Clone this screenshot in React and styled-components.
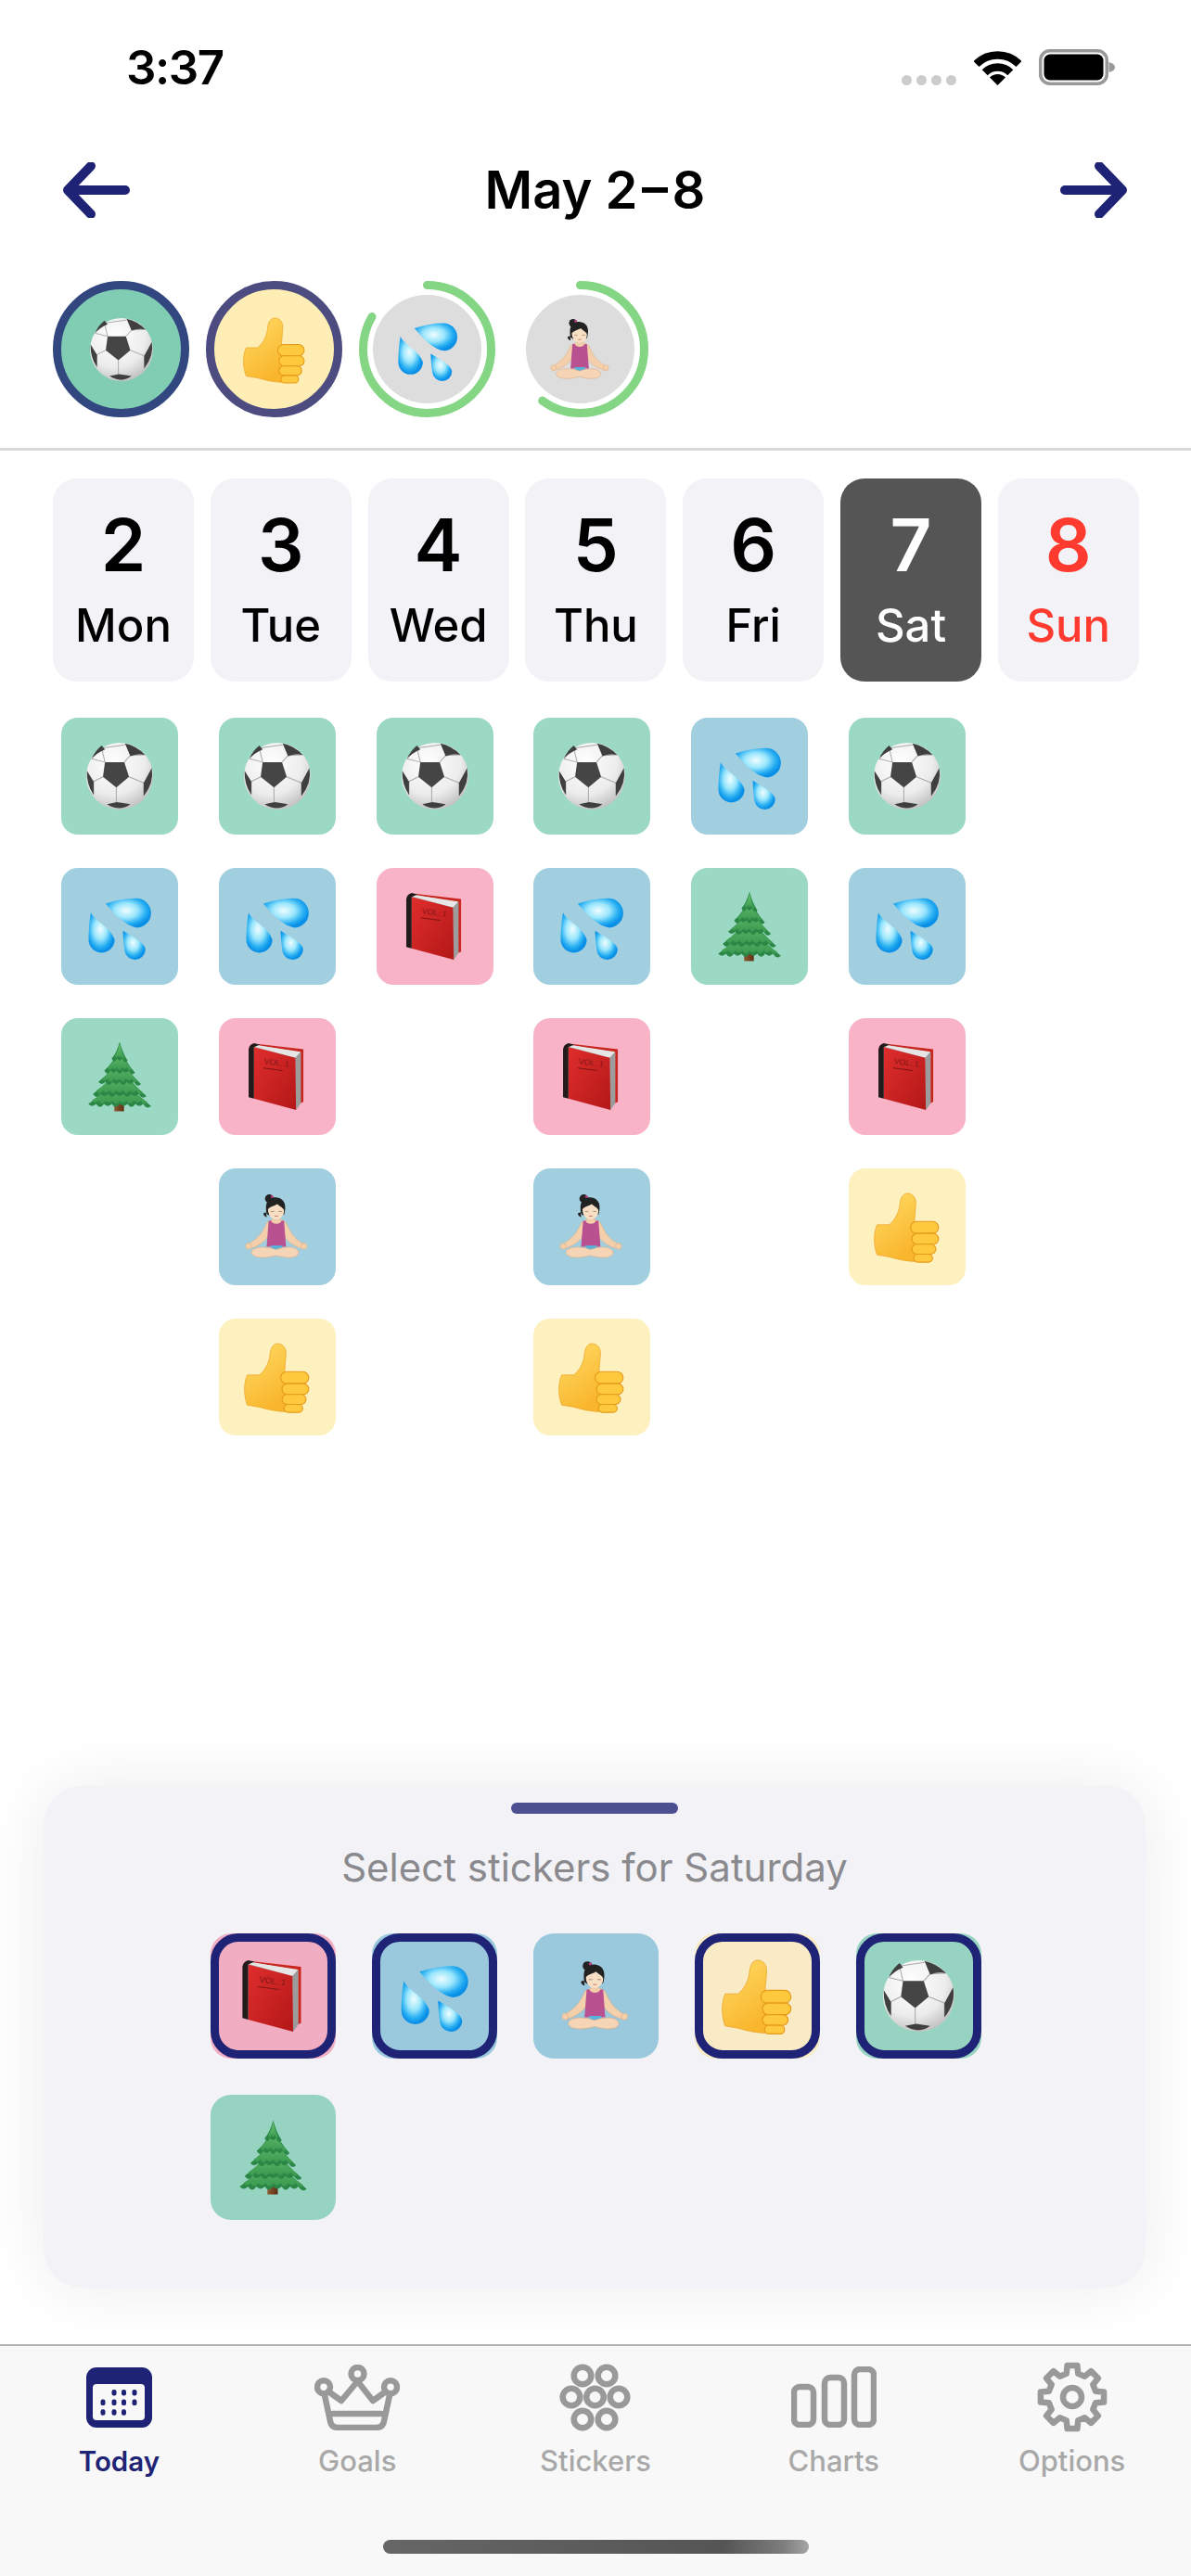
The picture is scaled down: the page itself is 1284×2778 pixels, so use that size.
import React from 'react'
import styled, { createGlobalStyle } from 'styled-components'

const NAVY = '#1f2375'
const GREY_ICON = '#999999'

const TONES = {
  ball: { day: '#9cd9c4', sheet: '#96d3c0' },
  tree: { day: '#9cd9c4', sheet: '#96d3c0' },
  drops: { day: '#a2cfe0', sheet: '#9ac8dc' },
  person: { day: '#a2cfe0', sheet: '#9ac8dc' },
  book: { day: '#f8b3c7', sheet: '#f1adc1' },
  thumb: { day: '#fef1c0', sheet: '#f8ebc6' },
}

const DAYS = [
  { num: 2, name: 'Mon', stickers: ['ball', 'drops', 'tree'] },
  { num: 3, name: 'Tue', stickers: ['ball', 'drops', 'book', 'person', 'thumb'] },
  { num: 4, name: 'Wed', stickers: ['ball', 'book'] },
  { num: 5, name: 'Thu', stickers: ['ball', 'drops', 'book', 'person', 'thumb'] },
  { num: 6, name: 'Fri', stickers: ['drops', 'tree'] },
  { num: 7, name: 'Sat', stickers: ['ball', 'drops', 'book', 'thumb'], selected: true },
  { num: 8, name: 'Sun', stickers: [], sunday: true },
]

const CHOICES = [
  { id: 'book', on: true },
  { id: 'drops', on: true },
  { id: 'person' },
  { id: 'thumb', on: true },
  { id: 'ball', on: true },
  { id: 'tree' },
]

const GlobalStyle = createGlobalStyle`
  html, body {
    margin: 0;
    padding: 0;
    background: #fff;
  }
  body {
    font-family: Inter, "Liberation Sans", sans-serif;
  }
`

const Page = styled.div`
  width: 1284px;
  height: 2778px;
  display: flex;
  flex-direction: column;
  background: #fff;
  overflow: hidden;
`

const StatusBar = styled.div`
  height: 130px;
  flex-shrink: 0;
  box-sizing: border-box;
  padding: 53px 82px 0 136px;
  display: flex;
  justify-content: space-between;
  align-items: flex-start;
`

const Clock = styled.span`
  font-size: 51px;
  font-weight: 600;
  line-height: 39px;
  letter-spacing: -1.5px;
  color: #000;
`

const StatusIcons = styled.div`
  display: flex;
  align-items: flex-end;
  height: 39px;
`

const SignalDots = styled.div`
  display: flex;
  gap: 5px;
  margin-right: 19px;
`

const SignalDot = styled.i`
  display: block;
  width: 11px;
  height: 11px;
  border-radius: 50%;
  background: #cccccc;
`

const WifiIcon = styled.svg`
  display: block;
  width: 51px;
  height: 37px;
  margin-right: 19px;
`

const BatteryIcon = styled.svg`
  display: block;
  width: 82px;
  height: 39px;
`

const Header = styled.header`
  height: 150px;
  flex-shrink: 0;
  box-sizing: border-box;
  padding: 0 69px 0 68px;
  display: flex;
  align-items: center;
  justify-content: space-between;
`

const ArrowIcon = styled.svg`
  display: block;
  width: 72px;
  height: 60px;
  color: ${NAVY};
`

const Title = styled.h1`
  margin: 0;
  font-size: 56px;
  font-weight: 600;
  line-height: 60px;
  color: #000;
`

const Rings = styled.div`
  display: flex;
  gap: 18px;
  padding: 23px 0 33px 57px;
  border-bottom: 3px solid #d8d8d8;
`

const DoneRing = styled.div`
  width: 147px;
  height: 147px;
  box-sizing: border-box;
  display: flex;
  align-items: center;
  justify-content: center;
  border-radius: 50%;
  border: 9px solid ${p => p.$border};
  background: ${p => p.$fill};
`

const ProgressRing = styled.div`
  position: relative;
  width: 147px;
  height: 147px;
  display: flex;
  align-items: center;
  justify-content: center;
`

const ProgressDisc = styled.div`
  width: 117px;
  height: 117px;
  display: flex;
  align-items: center;
  justify-content: center;
  border-radius: 50%;
  background: #dddddd;
`

const ProgressArc = styled.svg`
  position: absolute;
  inset: 0;
  width: 147px;
  height: 147px;
`

const Week = styled.section`
  display: grid;
  grid-template-columns: repeat(7, 152px);
  column-gap: 17.8px;
  padding: 30px 0 0 57px;
`

const DayCard = styled.div`
  height: 219px;
  box-sizing: border-box;
  padding-top: 33px;
  border-radius: 26px;
  text-align: center;
  background: ${p => (p.$selected ? '#555555' : '#f2f2f7')};
  color: ${p => (p.$selected ? '#fff' : p.$sunday ? '#ff3b30' : '#000')};
`

const DayNumber = styled.div`
  font-size: 78px;
  font-weight: 600;
  line-height: 78px;
`

const DayName = styled.div`
  margin-top: 23px;
  font-size: 49px;
  font-weight: 500;
  line-height: 50px;
`

const DayStickers = styled.div`
  display: flex;
  flex-direction: column;
  gap: 36px;
  padding: 39px 0 0 9px;
`

const Tile = styled.div`
  position: relative;
  box-sizing: border-box;
  width: ${p => p.$size}px;
  height: ${p => p.$size}px;
  display: flex;
  align-items: center;
  justify-content: center;
  border-radius: ${p => p.$radius}px;
  background: ${p => p.$bg};
`

const Picked = styled.div`
  position: absolute;
  inset: 0;
  border: 9px solid ${NAVY};
  border-radius: 30px;
`

const Spacer = styled.div`
  flex: 1;
`

const Sheet = styled.section`
  margin: 0 49px 61px 47px;
  height: 541px;
  box-sizing: border-box;
  padding-top: 18px;
  border-radius: 42px;
  background: #f2f2f7;
  box-shadow: 0 0 70px rgba(0, 0, 0, 0.08);
`

const Handle = styled.div`
  width: 180px;
  height: 12px;
  margin: 0 auto;
  border-radius: 6px;
  background: #4c5090;
`

const SheetTitle = styled.div`
  margin-top: 33px;
  text-align: center;
  font-size: 42px;
  line-height: 50px;
  color: #8a8a8e;
`

const SheetGrid = styled.div`
  display: grid;
  grid-template-columns: repeat(5, 135px);
  gap: 39px;
  padding: 46px 0 0 180px;
`

const TabBar = styled.nav`
  height: 250px;
  flex-shrink: 0;
  box-sizing: border-box;
  display: flex;
  flex-direction: column;
  border-top: 2px solid #b2b2b2;
  background: #f8f8f8;
`

const Tabs = styled.div`
  display: grid;
  grid-template-columns: repeat(5, 1fr);
  padding-top: 17px;
`

const Tab = styled.div`
  display: flex;
  flex-direction: column;
  align-items: center;
  color: ${p => (p.$active ? NAVY : '#a8a8a8')};
`

const TabIconBox = styled.div`
  height: 76px;
  display: flex;
  align-items: center;
  justify-content: center;
`

const TabSvg = styled.svg`
  display: block;
  width: ${p => p.$w}px;
  height: ${p => p.$h}px;
  fill: none;
  stroke: ${GREY_ICON};
  stroke-width: 6.5;
  stroke-linejoin: round;
  stroke-linecap: round;
`

const TabLabel = styled.span`
  margin-top: 16px;
  font-size: ${p => (p.$active ? 29.5 : 31)}px;
  font-weight: ${p => (p.$active ? 600 : 500)};
  line-height: 30px;
`

const HomeIndicator = styled.div`
  align-self: center;
  width: 459px;
  height: 15px;
  margin-top: 70px;
  border-radius: 8px;
  background: linear-gradient(90deg, #666 0%, #555 80%, #7d7d7d 94%, #a5a5a5 100%);
`

const Art = styled.svg`
  display: block;
  flex-shrink: 0;
  overflow: visible;
  width: ${p => p.$size}px;
  height: ${p => p.$size}px;
`

const Sprite = styled.svg`
  display: block;
  width: 0;
  height: 0;
`

const Sticker = ({ id, size }) => (
  <Art $size={size} viewBox="0 0 100 100">
    <use href={`#${id}`} />
  </Art>
)

// scalloped branch layer for the tree
const tierPath = (top, bottom, half, n) => {
  let d = `M50 ${top} Q${50 + half * 0.4} ${(top + bottom) / 2 + 4} ${50 + half} ${bottom}`
  const step = (2 * half) / n
  for (let i = 0; i < n; i++) {
    const x = 50 + half - step * (i + 1)
    const dip = i % 2 ? 3 : 6
    d += ` Q${x + step / 2} ${bottom + dip} ${x} ${bottom - 3}`
  }
  return d + ` Q${50 - half * 0.4} ${(top + bottom) / 2 + 4} 50 ${top}Z`
}

const TREE_TIERS = [
  [44, 94, 47, 8],
  [32, 79, 40, 7],
  [19, 61, 32, 6],
  [7, 44, 23, 5],
  [-2, 26, 12, 3],
]

const gearPath = (cx, cy, outer, root) => {
  const pts = []
  for (let i = 0; i < 8; i++) {
    const a = (i * 45 - 90) * (Math.PI / 180)
    const steps = [
      [-14, root],
      [-9, outer],
      [9, outer],
      [14, root],
    ]
    steps.forEach(([off, r]) => {
      const t = a + (off * Math.PI) / 180
      pts.push(`${(cx + r * Math.cos(t)).toFixed(1)} ${(cy + r * Math.sin(t)).toFixed(1)}`)
    })
  }
  return `M${pts.join(' L')}Z`
}

const EmojiSprite = () => (
  <Sprite aria-hidden="true">
    <defs>
      <radialGradient id="ballFill" cx="0.4" cy="0.3" r="0.8">
        <stop offset="0" stopColor="#ffffff" />
        <stop offset="0.6" stopColor="#ececec" />
        <stop offset="1" stopColor="#b4b4b4" />
      </radialGradient>
      <radialGradient id="dropFill" cx="0.45" cy="0.42" r="0.56">
        <stop offset="0" stopColor="#effdff" />
        <stop offset="0.45" stopColor="#9ae6fc" />
        <stop offset="0.8" stopColor="#25adf2" />
        <stop offset="1" stopColor="#0a8fe6" />
      </radialGradient>
      <linearGradient id="thumbFill" x1="0" y1="0" x2="0.5" y2="1">
        <stop offset="0" stopColor="#ffdc66" />
        <stop offset="1" stopColor="#f9b52c" />
      </linearGradient>
      <linearGradient id="bookFill" x1="0" y1="0" x2="1" y2="1">
        <stop offset="0" stopColor="#e02d2d" />
        <stop offset="1" stopColor="#b31818" />
      </linearGradient>
      <linearGradient id="treeFill" x1="0" y1="0" x2="0" y2="1">
        <stop offset="0" stopColor="#6cc270" />
        <stop offset="1" stopColor="#3a9a50" />
      </linearGradient>
      <linearGradient id="trunkFill" x1="0" y1="0" x2="1" y2="0">
        <stop offset="0" stopColor="#8d5a30" />
        <stop offset="1" stopColor="#5c3014" />
      </linearGradient>

      <g id="ball">
        <circle cx="50" cy="50" r="50" fill="url(#ballFill)" />
        <path
          d="M28 29 L23 8 M57 29 L66 19 M64 51 L86 60 M45 67 L45 92 M25 51 L11 58 M23 8 L58 3 M66 19 L88 18 M86 60 L86 79 M11 58 L11 77 M28 29 L8 24"
          stroke="#a9a9a9"
          strokeWidth="1.4"
          fill="none"
        />
        <path d="M28 29 L57 29 L64 51 L45 67 L25 51Z" fill="#454545" />
        <path d="M8 24 Q13 12 23 4 L28 10 Q16 15 8 24Z" fill="#3f3f3f" />
        <path d="M58 1 Q76 5 88 18 Q75 16 66 20Z" fill="#3f3f3f" />
        <path d="M98 38 Q102 60 86 80 L86 60Z" fill="#3f3f3f" />
        <path d="M1 42 Q0 62 11 78 L11 58Z" fill="#3f3f3f" />
        <path d="M31 92 L46 89 L66 92 Q50 104 31 92Z" fill="#3f3f3f" />
      </g>

      <g id="drops" fill="url(#dropFill)">
        <path d="M29 16 C45 11 60 8 74 8 A22 22 0 0 1 76 52 C60 50 42 32 29 16Z" />
        <path d="M7 29 C10 40 38 52 42.5 70 A19.5 19.5 0 0 1 3.5 70 C3.5 55 5 40 7 29Z" />
        <path d="M55 56.5 C65 63 89 75 88.6 85 A15.6 15.6 0 0 1 57.5 86 C56 76 55 65 55 56.5Z" />
      </g>

      <g id="thumb">
        <path
          d="M5 47 L23 47 C32 40 38 28 39 16 C40 5 45 0 50 0 C58 0 63 6 63 14 C63 24 61 32 61 42 L72 60 L72 100 L60 102 C45 101 33 98 23 95 L5 92 C0 80 -1 60 5 47Z"
          fill="url(#thumbFill)"
          stroke="#eba425"
          strokeWidth="1"
        />
        <g fill="#ffc93e" stroke="#e59a1c" strokeWidth="1.6">
          <rect x="55" y="42" width="42" height="18" rx="9" />
          <rect x="57" y="60" width="40" height="16" rx="8" />
          <rect x="57" y="76" width="36" height="15" rx="7.5" />
          <rect x="60" y="91" width="28" height="12" rx="6" />
        </g>
      </g>

      <g id="book">
        <path d="M22 1.5 L89 9 L89 88 L78 93 L30 40Z" fill="#c9261f" />
        <path d="M15 5 L22 3 L85 14 L85 90 L78 100 L50 50Z" fill="#b8b8b8" />
        <path d="M15 5 L20 3 L85 13 L77 22Z" fill="#e6e6e6" />
        <path d="M77 22 L85 13 L85 90 L78 100Z" fill="#9c9c9c" />
        <path d="M15 6 L77 22 L78 100 L15 83Z" fill="url(#bookFill)" />
        <path d="M7 9 Q8 2 15 0 L24 2 L15 6 L15 83 L7 81Z" fill="#231a1a" />
        <text
          x="30"
          y="31"
          fontSize="12"
          fontFamily="Liberation Sans, sans-serif"
          fill="#7e1616"
          transform="rotate(7 30 31)"
        >
          VOL. 1
        </text>
        <path d="M29 37 L58 41" stroke="#7e1616" strokeWidth="1.4" />
      </g>

      <g id="person">
        <path
          d="M34 44 C38 40 44 39 48 38 C54 39 60 40 63 44 C68 54 72 66 90 76 L88 83 C72 78 62 70 60 62 L37 62 C34 70 24 78 8 83 L6 76 C24 66 30 54 34 44Z"
          fill="#f3cfab"
          stroke="#dca97f"
          strokeWidth="0.7"
        />
        <circle cx="7" cy="79" r="4.5" fill="#f3cfab" stroke="#dca97f" strokeWidth="0.7" />
        <circle cx="90" cy="79" r="4.5" fill="#f3cfab" stroke="#dca97f" strokeWidth="0.7" />
        <path d="M43 32 L53 32 L54 42 L43 42Z" fill="#f0cba7" />
        <path d="M37 41 L41 41 C42 47 55 47 56 41 L60 41 L63 80 L34 80Z" fill="#b9508f" />
        <path d="M40 78 L58 78 L54 86 L44 86Z" fill="#58b4dc" />
        <path
          d="M11 88 C13 80 30 78 48 84 C66 78 80 80 82 88 C82 97 66 98 48 93 C30 98 12 97 11 88Z"
          fill="#f5d5b5"
          stroke="#dca97f"
          strokeWidth="0.8"
        />
        <path d="M33 28 C34 35 36 38 30 33 L29 30Z" fill="#222" />
        <circle cx="38" cy="8" r="6.5" fill="#222" />
        <path d="M34 31 C30 12 38 5 48 6 C58 7 64 14 61 28 L60 32 L38 33Z" fill="#222" />
        <path d="M36 24 C38 20 48 18 50 16 C54 20 60 22 60 26 C60 34 54 39 48 39 C41 39 36 32 36 24Z" fill="#f7dfc6" />
        <circle cx="42" cy="5" r="2" fill="#c43d86" />
        <path d="M40 27 L45 27 M52 27 L57 27" stroke="#8a6a55" strokeWidth="0.9" />
        <path d="M46 34 L51 34" stroke="#c8705f" strokeWidth="1.3" />
      </g>

      <g id="tree">
        <rect x="42" y="86" width="14.5" height="16" fill="url(#trunkFill)" />
        {TREE_TIERS.map(([top, bottom, half, n]) => (
          <g key={top}>
            <path d={tierPath(top, bottom, half, n)} fill="#2a8745" />
            <path d={tierPath(top + 2, bottom - 5, half - 5, n)} fill="url(#treeFill)" />
          </g>
        ))}
      </g>
    </defs>
  </Sprite>
)

const Arrow = ({ flip }) => (
  <ArrowIcon viewBox="0 0 72 60">
    <path
      d={flip ? 'M5 30 H67 M42 4 L67 30 L42 56' : 'M67 30 H5 M30 4 L5 30 L30 56'}
      fill="none"
      stroke="currentColor"
      strokeWidth="10"
      strokeLinecap="round"
      strokeLinejoin="round"
    />
  </ArrowIcon>
)

const Progress = ({ id, part }) => {
  const r = 69
  const length = 2 * Math.PI * r
  return (
    <ProgressRing>
      <ProgressDisc>
        <Sticker id={id} size={68} />
      </ProgressDisc>
      <ProgressArc viewBox="0 0 147 147">
        <circle
          cx="73.5"
          cy="73.5"
          r={r}
          fill="none"
          stroke="#84d584"
          strokeWidth="9"
          strokeLinecap="round"
          strokeDasharray={`${length * part} ${length}`}
          transform="rotate(-90 73.5 73.5)"
        />
      </ProgressArc>
    </ProgressRing>
  )
}

const TodayIcon = () => {
  const rows = [
    [0, [123, 133.5, 145]],
    [1, [111, 123, 133.5, 145]],
    [2, [111, 123, 133.5]],
  ]
  return (
    <svg width="71" height="65" viewBox="93 2552 71 65" style={{ display: 'block' }}>
      <rect x="93" y="2552" width="71" height="65" rx="11" fill={NAVY} />
      <rect x="100" y="2570" width="56" height="39" rx="4" fill="#f8f8f8" />
      {rows.map(([row, xs]) =>
        xs.map(x => (
          <rect key={`${row}-${x}`} x={x - 2.5} y={2576 + row * 10.6} width="5" height="6.5" rx="2.2" fill={NAVY} />
        ))
      )}
    </svg>
  )
}

const CrownIcon = () => (
  <TabSvg $w={92} $h={71} viewBox="0 0 92 71">
    <circle cx="46.5" cy="10" r="7" />
    <circle cx="10" cy="24.3" r="7" />
    <circle cx="82" cy="24.3" r="7" />
    <path d="M11 33 L17 61 Q18 68 26 68 L66 68 Q74 68 75 61 L81 33" />
    <path d="M15 29 L29 39 L46.5 18 L63 39 L77 29" />
    <path d="M20 53 H72" />
  </TabSvg>
)

const FlowerIcon = () => {
  const centers = [
    [25, 13],
    [51, 13],
    [13, 36],
    [38.5, 36],
    [64, 36],
    [25, 60],
    [51, 60],
  ]
  return (
    <TabSvg $w={77} $h={73} viewBox="0 0 77 73">
      {centers.map(([cx, cy]) => (
        <circle key={`${cx}-${cy}`} cx={cx} cy={cy} r="9.3" />
      ))}
    </TabSvg>
  )
}

const BarsIcon = () => (
  <TabSvg $w={92} $h={66} viewBox="0 0 92 66">
    <rect x="3" y="22" width="21" height="41" rx="6" />
    <rect x="36" y="12" width="21" height="51" rx="6" />
    <rect x="68" y="3" width="21" height="60" rx="6" />
  </TabSvg>
)

const GearIcon = () => (
  <TabSvg $w={76} $h={76} viewBox="0 0 76 76">
    <path d={gearPath(38, 38, 34.5, 26)} />
    <circle cx="38" cy="38" r="10" />
  </TabSvg>
)

const TABS = [
  { label: 'Today', Icon: TodayIcon, active: true },
  { label: 'Goals', Icon: CrownIcon },
  { label: 'Stickers', Icon: FlowerIcon },
  { label: 'Charts', Icon: BarsIcon },
  { label: 'Options', Icon: GearIcon },
]

const App = () => (
  <Page>
    <GlobalStyle />
    <EmojiSprite />
    <StatusBar>
      <Clock>3:37</Clock>
      <StatusIcons>
        <SignalDots>
          {[0, 1, 2, 3].map(i => (
            <SignalDot key={i} />
          ))}
        </SignalDots>
        <WifiIcon viewBox="0 0 51 37">
          <path d="M2.5 14 A32.5 32.5 0 0 1 48.5 14 M11.7 23.2 A19.5 19.5 0 0 1 39.3 23.2" fill="none" stroke="#000" strokeWidth="8.5" />
          <path d="M25.5 37 L17 28.5 A12 12 0 0 1 34 28.5Z" fill="#000" />
        </WifiIcon>
        <BatteryIcon viewBox="0 0 82 39">
          <rect x="1.75" y="1.75" width="71.5" height="35.5" rx="10" fill="none" stroke="#999" strokeWidth="3.5" />
          <rect x="5.5" y="5.5" width="64" height="28" rx="6.5" fill="#000" />
          <path d="M75.5 14 Q82 15.5 82 19.5 Q82 23.5 75.5 25Z" fill="#999" />
        </BatteryIcon>
      </StatusIcons>
    </StatusBar>

    <Header>
      <Arrow />
      <Title>May 2&#8202;–&#8202;8</Title>
      <Arrow flip />
    </Header>

    <Rings>
      <DoneRing $border="#32477f" $fill="#80cdb4">
        <Sticker id="ball" size={68} />
      </DoneRing>
      <DoneRing $border="#4c4c80" $fill="#feeeb5">
        <Sticker id="thumb" size={68} />
      </DoneRing>
      <Progress id="drops" part={5 / 6} />
      <Progress id="person" part={3 / 5} />
    </Rings>

    <Week>
      {DAYS.map(d => (
        <DayCard key={d.name} $selected={d.selected} $sunday={d.sunday}>
          <DayNumber>{d.num}</DayNumber>
          <DayName>{d.name}</DayName>
        </DayCard>
      ))}
      {DAYS.map(d => (
        <DayStickers key={d.name}>
          {d.stickers.map(id => (
            <Tile key={id} $size={126} $radius={18} $bg={TONES[id].day}>
              <Sticker id={id} size={72} />
            </Tile>
          ))}
        </DayStickers>
      ))}
    </Week>

    <Spacer />

    <Sheet>
      <Handle />
      <SheetTitle>Select stickers for Saturday</SheetTitle>
      <SheetGrid>
        {CHOICES.map(c => (
          <Tile key={c.id} $size={135} $radius={22} $bg={TONES[c.id].sheet}>
            <Sticker id={c.id} size={77} />
            {c.on && <Picked />}
          </Tile>
        ))}
      </SheetGrid>
    </Sheet>

    <TabBar>
      <Tabs>
        {TABS.map(({ label, Icon, active }) => (
          <Tab key={label} $active={active}>
            <TabIconBox>
              <Icon />
            </TabIconBox>
            <TabLabel $active={active}>{label}</TabLabel>
          </Tab>
        ))}
      </Tabs>
      <HomeIndicator />
    </TabBar>
  </Page>
)

export default App
